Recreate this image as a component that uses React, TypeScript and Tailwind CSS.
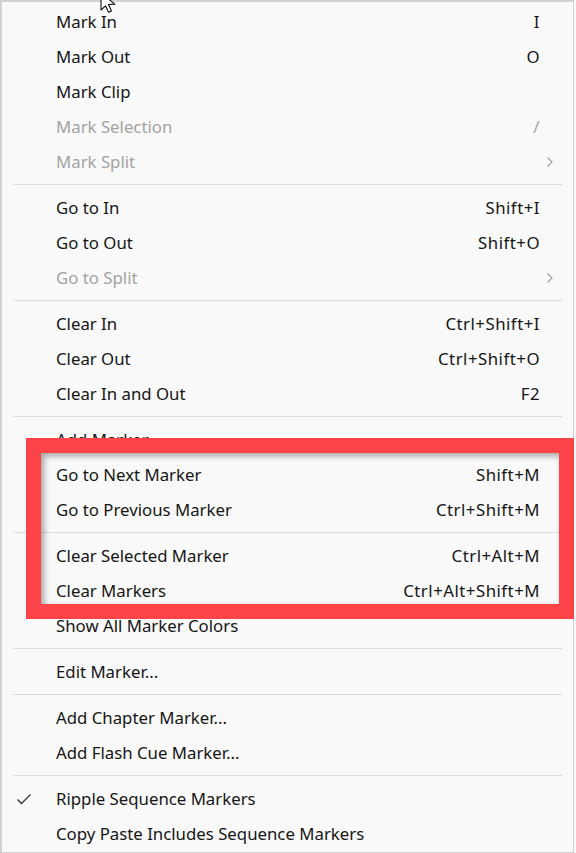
import React from "react";

type Item =
  | { type: "sep" }
  | {
      type?: "item";
      label: string;
      shortcut?: string;
      disabled?: boolean;
      submenu?: boolean;
      checked?: boolean;
    };

const items: Item[] = [
  { label: "Mark In", shortcut: "I" },
  { label: "Mark Out", shortcut: "O" },
  { label: "Mark Clip" },
  { label: "Mark Selection", shortcut: "/", disabled: true },
  { label: "Mark Split", disabled: true, submenu: true },
  { type: "sep" },
  { label: "Go to In", shortcut: "Shift+I" },
  { label: "Go to Out", shortcut: "Shift+O" },
  { label: "Go to Split", disabled: true, submenu: true },
  { type: "sep" },
  { label: "Clear In", shortcut: "Ctrl+Shift+I" },
  { label: "Clear Out", shortcut: "Ctrl+Shift+O" },
  { label: "Clear In and Out", shortcut: "F2" },
  { type: "sep" },
  { label: "Add Marker" },
  { label: "Go to Next Marker", shortcut: "Shift+M" },
  { label: "Go to Previous Marker", shortcut: "Ctrl+Shift+M" },
  { type: "sep" },
  { label: "Clear Selected Marker", shortcut: "Ctrl+Alt+M" },
  { label: "Clear Markers", shortcut: "Ctrl+Alt+Shift+M" },
  { label: "Show All Marker Colors" },
  { type: "sep" },
  { label: "Edit Marker..." },
  { type: "sep" },
  { label: "Add Chapter Marker..." },
  { label: "Add Flash Cue Marker..." },
  { type: "sep" },
  { label: "Ripple Sequence Markers", checked: true },
  { label: "Copy Paste Includes Sequence Markers" },
];

function Chevron() {
  return (
    <svg width="8" height="12" viewBox="0 0 8 12" fill="none">
      <path d="M1.5 1.5l4.5 4.5-4.5 4.5" stroke="#a0a0a0" strokeWidth="1.2" />
    </svg>
  );
}

function Check() {
  return (
    <svg width="16" height="12" viewBox="0 0 16 12" fill="none">
      <path d="M1.5 6.5l4 4L14.5 1.5" stroke="#3a3a3a" strokeWidth="1.4" />
    </svg>
  );
}

function Cursor() {
  return (
    <svg width="22" height="22" viewBox="0 0 22 22" className="absolute left-[98px] top-[-8px]">
      <path
        d="M3 1v17l4.5-4.2 3 6.5 3-1.4-3-6.4 6.3-.4z"
        fill="#ffffff"
        stroke="#111"
        strokeWidth="1.1"
        strokeLinejoin="round"
      />
    </svg>
  );
}

export default function App() {
  return (
    <div className="relative w-[576px] h-[853px] overflow-hidden bg-[#f9f9f9] font-['Noto_Sans',sans-serif]">
      <div className="w-[574px] border-t-2 border-l-2 border-r border-b border-[#d2d2d2] bg-[#f9f9f9] pt-[2px] pb-[1px]">
        {items.map((it, i) =>
          it.type === "sep" ? (
            <div key={i} className="mx-[11px] my-[5px] h-px bg-[#dcdcdc]" />
          ) : (
            <div
              key={i}
              className={
                "flex h-[35px] items-center text-[16.8px] " +
                (it.disabled ? "text-[#a3a3a3]" : "text-[#161616]")
              }
            >
              <div className="flex w-[54px] justify-center pr-[10px]">
                {it.checked && <Check />}
              </div>
              <span className="flex-1">{it.label}</span>
              {it.shortcut && <span className="tracking-[0.5px]">{it.shortcut}</span>}
              <div className="flex w-[33px] justify-end pr-[19px]">
                {it.submenu && <Chevron />}
              </div>
            </div>
          )
        )}
      </div>

      <div className="absolute left-[26px] top-[438px] h-[181px] w-[548px] border-[15px] border-[#fe4448] shadow-[inset_3px_3px_6px_rgba(0,0,0,0.35)]" />
      <Cursor />
    </div>
  );
}
